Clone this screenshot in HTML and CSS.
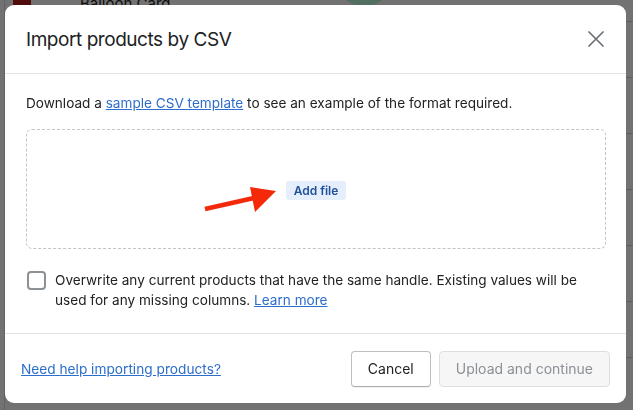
FILE: index.html
```
<html>

<head>
	<title>Import products by CSV</title>
	<link rel="stylesheet" href="styles.css">
</head>

<body>
	<div class="page">
		<div class="row first">
			<span class="thumb"></span>
			<span class="name">Balloon Card</span>
			<span class="avatar"></span>
		</div>
		<div class="row"></div>
		<div class="row"></div>
		<div class="row"></div>
		<div class="row"></div>
		<div class="row"></div>
		<div class="row"></div>
		<div class="row"></div>
	</div>

	<div class="backdrop">
		<div class="modal">
			<header class="modal-header">
				<h2>Import products by CSV</h2>
				<button class="close" aria-label="Close">
					<svg width="16" height="16" viewBox="0 0 16 16">
						<path d="M1 1L15 15M15 1L1 15" stroke="#6d7175" stroke-width="1.7" stroke-linecap="round" />
					</svg>
				</button>
			</header>

			<section class="modal-body">
				<p>Download a <a href="#">sample CSV template</a> to see an example of the format required.</p>
				<div class="dropzone">
					<span class="add-file">Add file</span>
					<svg class="arrow" width="80" height="35" viewBox="0 0 80 35">
						<path d="M5 30L54 19" stroke="#f3290a" stroke-width="4.5" />
						<path d="M50 8L76 12L55 33Z" fill="#f3290a" />
					</svg>
				</div>
				<label class="check">
					<input type="checkbox" />
					<span class="box"></span>
					<span>Overwrite any current products that have the same handle. Existing values will be used for any missing columns. <a href="#">Learn more</a></span>
				</label>
			</section>

			<footer class="modal-footer">
				<a href="#">Need help importing products?</a>
				<div class="actions">
					<button class="btn">Cancel</button>
					<button class="btn disabled" disabled>Upload and continue</button>
				</div>
			</footer>
		</div>
	</div>
</body>

</html>
```

FILE: styles.css
```
html {
	font-family: Inter, "Noto Sans", sans-serif;
}

body {
	margin: 0;
	width: 633px;
	height: 410px;
	overflow: hidden;
	background: #fafafa;
}

.page {
	padding-top: 21px;
	margin-left: 4px;
	border-left: 1px solid #d8d8d8;
}

.row {
	height: 55px;
	border-top: 1px solid #d0d0d0;
}

.row.first {
	position: relative;
	height: 0;
	border-top: 0;
}

.thumb {
	position: absolute;
	top: -21px;
	left: 8px;
	width: 18px;
	height: 12px;
	background: #b01a1a;
}

.name {
	position: absolute;
	top: -27px;
	left: 75px;
	font-size: 15px;
	color: #202223;
}

.avatar {
	position: absolute;
	top: -77px;
	left: 328px;
	width: 62px;
	height: 62px;
	border-radius: 50%;
	background: #b4f5d6;
}

.backdrop {
	position: fixed;
	inset: 0;
	background: rgba(0, 0, 0, 0.545);
	padding: 5px 7px 7px 5px;
	box-sizing: border-box;
}

.modal {
	background: #fff;
	border-radius: 9px;
	height: 398px;
	display: flex;
	flex-direction: column;
	color: #202223;
}

.modal-header {
	display: flex;
	align-items: center;
	justify-content: space-between;
	height: 68px;
	padding: 0 22px 0 21px;
	border-bottom: 1px solid #e1e3e5;
}

.modal-header h2 {
	margin: 0;
	font-size: 19px;
	font-weight: 400;
	letter-spacing: -0.45px;
}

.close {
	border: 0;
	background: none;
	padding: 0;
	display: flex;
}

.modal-body {
	padding: 19px 20px 0 21px;
	height: 260px;
	box-sizing: border-box;
	border-bottom: 1px solid #e1e3e5;
	font-size: 13.6px;
}

.modal-body p {
	margin: 0 0 16px;
	line-height: 20px;
}

a {
	color: #2c6ecb;
}

.dropzone {
	position: relative;
	height: 118px;
	border: 1px dashed #c4c4c4;
	border-radius: 6px;
	display: flex;
	align-items: center;
	justify-content: center;
	margin-bottom: 21px;
}

.add-file {
	background: #e4eefc;
	color: #1f5199;
	font-size: 12px;
	font-weight: 600;
	padding: 2px 8px;
	border-radius: 3px;
	margin-top: 2px;
}

.arrow {
	position: absolute;
	left: 173px;
	top: 49px;
}

.check {
	display: flex;
	gap: 9px;
	line-height: 20px;
	padding-right: 20px;
}

.check input {
	display: none;
}

.box {
	flex: none;
	width: 15px;
	height: 15px;
	margin: 1px 0 0 1px;
	border: 2px solid #8c9196;
	border-radius: 4px;
}

.modal-footer {
	flex: 1;
	display: flex;
	align-items: center;
	justify-content: space-between;
	padding: 0 16px 0 16px;
	font-size: 13.7px;
}

.actions {
	display: flex;
	gap: 8px;
}

.btn {
	font: inherit;
	font-size: 14px;
	height: 36px;
	padding: 0 16px;
	background: #fff;
	color: #202223;
	border: 1px solid #babfc3;
	border-bottom-color: #a9aeb2;
	border-radius: 4px;
	box-shadow: 0 1px 0 rgba(0, 0, 0, 0.05);
}

.btn.disabled {
	background: #f6f6f7;
	color: #8c9196;
	border-color: #dcdfe2;
	box-shadow: none;
}
```
